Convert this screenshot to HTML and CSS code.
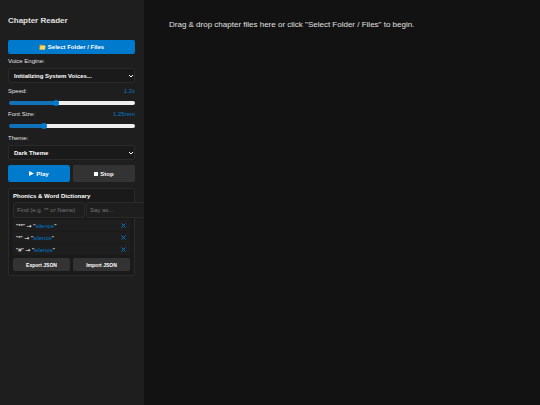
FILE: index.html
```html
<!DOCTYPE html>
<html lang="en">
<head>
<meta charset="utf-8">
<title>Chapter Reader</title>
<link rel="stylesheet" href="styles.css">
</head>
<body>
<aside class="sidebar">
  <h1>Chapter Reader</h1>
  <button class="btn primary select-files" type="button">
    <svg class="folder" viewBox="0 0 14 12" aria-hidden="true"><path d="M1 2l4-1 1 1h6v9H1z" fill="#d9a52b"/><path d="M3 4h10l-1 7H1z" fill="#ffd660"/></svg>
    Select Folder / Files
  </button>
  <label class="row" for="voice">Voice Engine:</label>
  <div class="picker">
    <select id="voice"><option>Initializing System Voices...</option></select>
    <svg class="chevron" viewBox="0 0 6 4" aria-hidden="true"><path d="M1 1l2 2 2-2" fill="none" stroke="#fff"/></svg>
  </div>
  <label class="row" for="speed">Speed: <span class="value">1.2x</span></label>
  <input class="slider speed" id="speed" type="range" min="0.5" max="2.4" step="0.1" value="1.2">
  <label class="row" for="size">Font Size: <span class="value">1.25rem</span></label>
  <input class="slider size" id="size" type="range" min="0.8" max="2.5" step="0.05" value="1.25">
  <label class="row theme-label" for="theme">Theme:</label>
  <div class="picker">
    <select id="theme"><option>Dark Theme</option></select>
    <svg class="chevron" viewBox="0 0 6 4" aria-hidden="true"><path d="M1 1l2 2 2-2" fill="none" stroke="#fff"/></svg>
  </div>
  <div class="pair playback">
    <button class="btn primary" type="button"><svg class="glyph" viewBox="0 0 10 10" aria-hidden="true"><path d="M0 0l10 5-10 5z" fill="#fff"/></svg>Play</button>
    <button class="btn" type="button"><svg class="glyph stop" viewBox="0 0 4 4" aria-hidden="true"><path d="M0 0h4v4H0z" fill="#fff"/></svg>Stop</button>
  </div>
  <section class="dictionary">
    <h2>Phonics &amp; Word Dictionary</h2>
    <div class="fields">
      <input type="text" aria-label="Find" placeholder="Find (e.g. ** or Name)">
      <input type="text" aria-label="Say as" placeholder="Say as...">
    </div>
    <ul class="rules">
      <li><span>"**" <span class="arrow">→</span> "<em>silence</em>"</span><button class="remove" type="button" aria-label="Remove"><svg viewBox="0 0 5 5" aria-hidden="true"><path d="M.5.5l4 4m0-4l-4 4"/></svg></button></li>
      <li><span>"*" <span class="arrow">→</span> "<em>silence</em>"</span><button class="remove" type="button" aria-label="Remove"><svg viewBox="0 0 5 5" aria-hidden="true"><path d="M.5.5l4 4m0-4l-4 4"/></svg></button></li>
      <li><span>"#" <span class="arrow">→</span> "<em>silence</em>"</span><button class="remove" type="button" aria-label="Remove"><svg viewBox="0 0 5 5" aria-hidden="true"><path d="M.5.5l4 4m0-4l-4 4"/></svg></button></li>
    </ul>
    <div class="pair files">
      <button class="btn" type="button">Export JSON</button>
      <button class="btn" type="button">Import JSON</button>
    </div>
  </section>
</aside>
<main class="reader">
  <p>Drag &amp; drop chapter files here or click "Select Folder / Files" to begin.</p>
</main>
</body>
</html>
```
FILE: styles.css
```css
* {
  box-sizing: border-box;
}

body {
  margin: 0;
  min-height: 100vh;
  display: flex;
  background: #121212;
  color: #e0e0e0;
  font-family: "Liberation Sans", Arial, sans-serif;
  font-size: 6px;
}

button,
input,
select {
  font: inherit;
  color: inherit;
  margin: 0;
}

.sidebar {
  flex: 0 0 144px;
  display: flex;
  flex-direction: column;
  padding: 16px 9px 8px 8px;
  background: #1e1e1e;
  overflow: hidden;
}

h1 {
  margin: 0 0 14px;
  font-size: 8px;
  line-height: 10px;
}

.btn {
  display: flex;
  flex: 1;
  align-items: center;
  justify-content: center;
  gap: 2px;
  padding: 0;
  border: 0;
  border-radius: 2px;
  background: #333;
  color: #fff;
  font-weight: bold;
  line-height: 8px;
}

.primary {
  background: #007acc;
}

.select-files {
  flex: none;
  height: 14px;
  margin-bottom: 3px;
}

.folder {
  width: 7px;
  height: 6px;
}

.row {
  display: flex;
  justify-content: space-between;
  line-height: 8px;
}

.value {
  color: #007acc;
}

.theme-label {
  margin-top: 1px;
}

.picker {
  position: relative;
  margin: 3px 0 4px;
}

select {
  display: block;
  width: 100%;
  height: 15px;
  padding: 0 5px;
  appearance: none;
  border: 1px solid #2a2a2a;
  border-radius: 2px;
  background: #1a1a1a;
  color: #fff;
  font-weight: bold;
}

.chevron {
  position: absolute;
  right: 1px;
  top: 6px;
  width: 6px;
  height: 4px;
}

.slider {
  appearance: none;
  height: 4px;
  margin: 6px 0 5px 1px;
  border-radius: 2px;
  background: linear-gradient(to right, #1272b8 var(--fill), #efefef var(--fill));
}

.slider::-webkit-slider-thumb {
  appearance: none;
  width: 6px;
  height: 6px;
  border-radius: 50%;
  background: #007acc;
}

.speed {
  --fill: 37%;
}

.size {
  --fill: 27%;
}

.pair {
  display: flex;
  gap: 3px;
}

.playback {
  height: 17px;
  margin-top: 1px;
}

.glyph {
  width: 5px;
  height: 5px;
}

.stop {
  width: 4px;
  height: 4px;
}

.dictionary {
  margin-top: 6px;
  padding: 4px;
  border: 1px solid #2a2a2a;
  border-radius: 2px;
  background: #1a1a1a;
}

h2 {
  margin: 0 0 2px;
  font-size: 6px;
  line-height: 7px;
  color: #fff;
}

.fields {
  display: flex;
  gap: 1px;
}

.fields input {
  flex: 0 0 72px;
  min-width: 0;
  height: 16px;
  padding: 0 3px;
  border: 1px solid #2a2a2a;
  border-radius: 2px;
  background: #1e1e1e;
}

.fields input::placeholder {
  color: #757575;
}

.rules {
  display: grid;
  gap: 1px;
  margin: 2px 0 3px;
  padding: 0;
  list-style: none;
}

.rules li {
  display: flex;
  align-items: center;
  justify-content: space-between;
  height: 11px;
  padding: 0 4px 0 3px;
  border-radius: 1px;
  background: #1e1e1e;
  color: #fff;
}

.arrow {
  font-family: "DejaVu Sans", sans-serif;
  line-height: 1;
}

.rules em {
  color: #007acc;
  font-style: normal;
}

.remove {
  display: flex;
  padding: 0;
  border: 0;
  background: none;
}

.remove svg {
  width: 5px;
  height: 5px;
  fill: none;
  stroke: #007acc;
}

.files {
  height: 13px;
}

.files .btn {
  font-size: 5px;
}

.reader {
  flex: 1;
  padding: 20px 25px;
}

.reader p {
  margin: 0;
  font-size: 8px;
  line-height: 10px;
}
```
